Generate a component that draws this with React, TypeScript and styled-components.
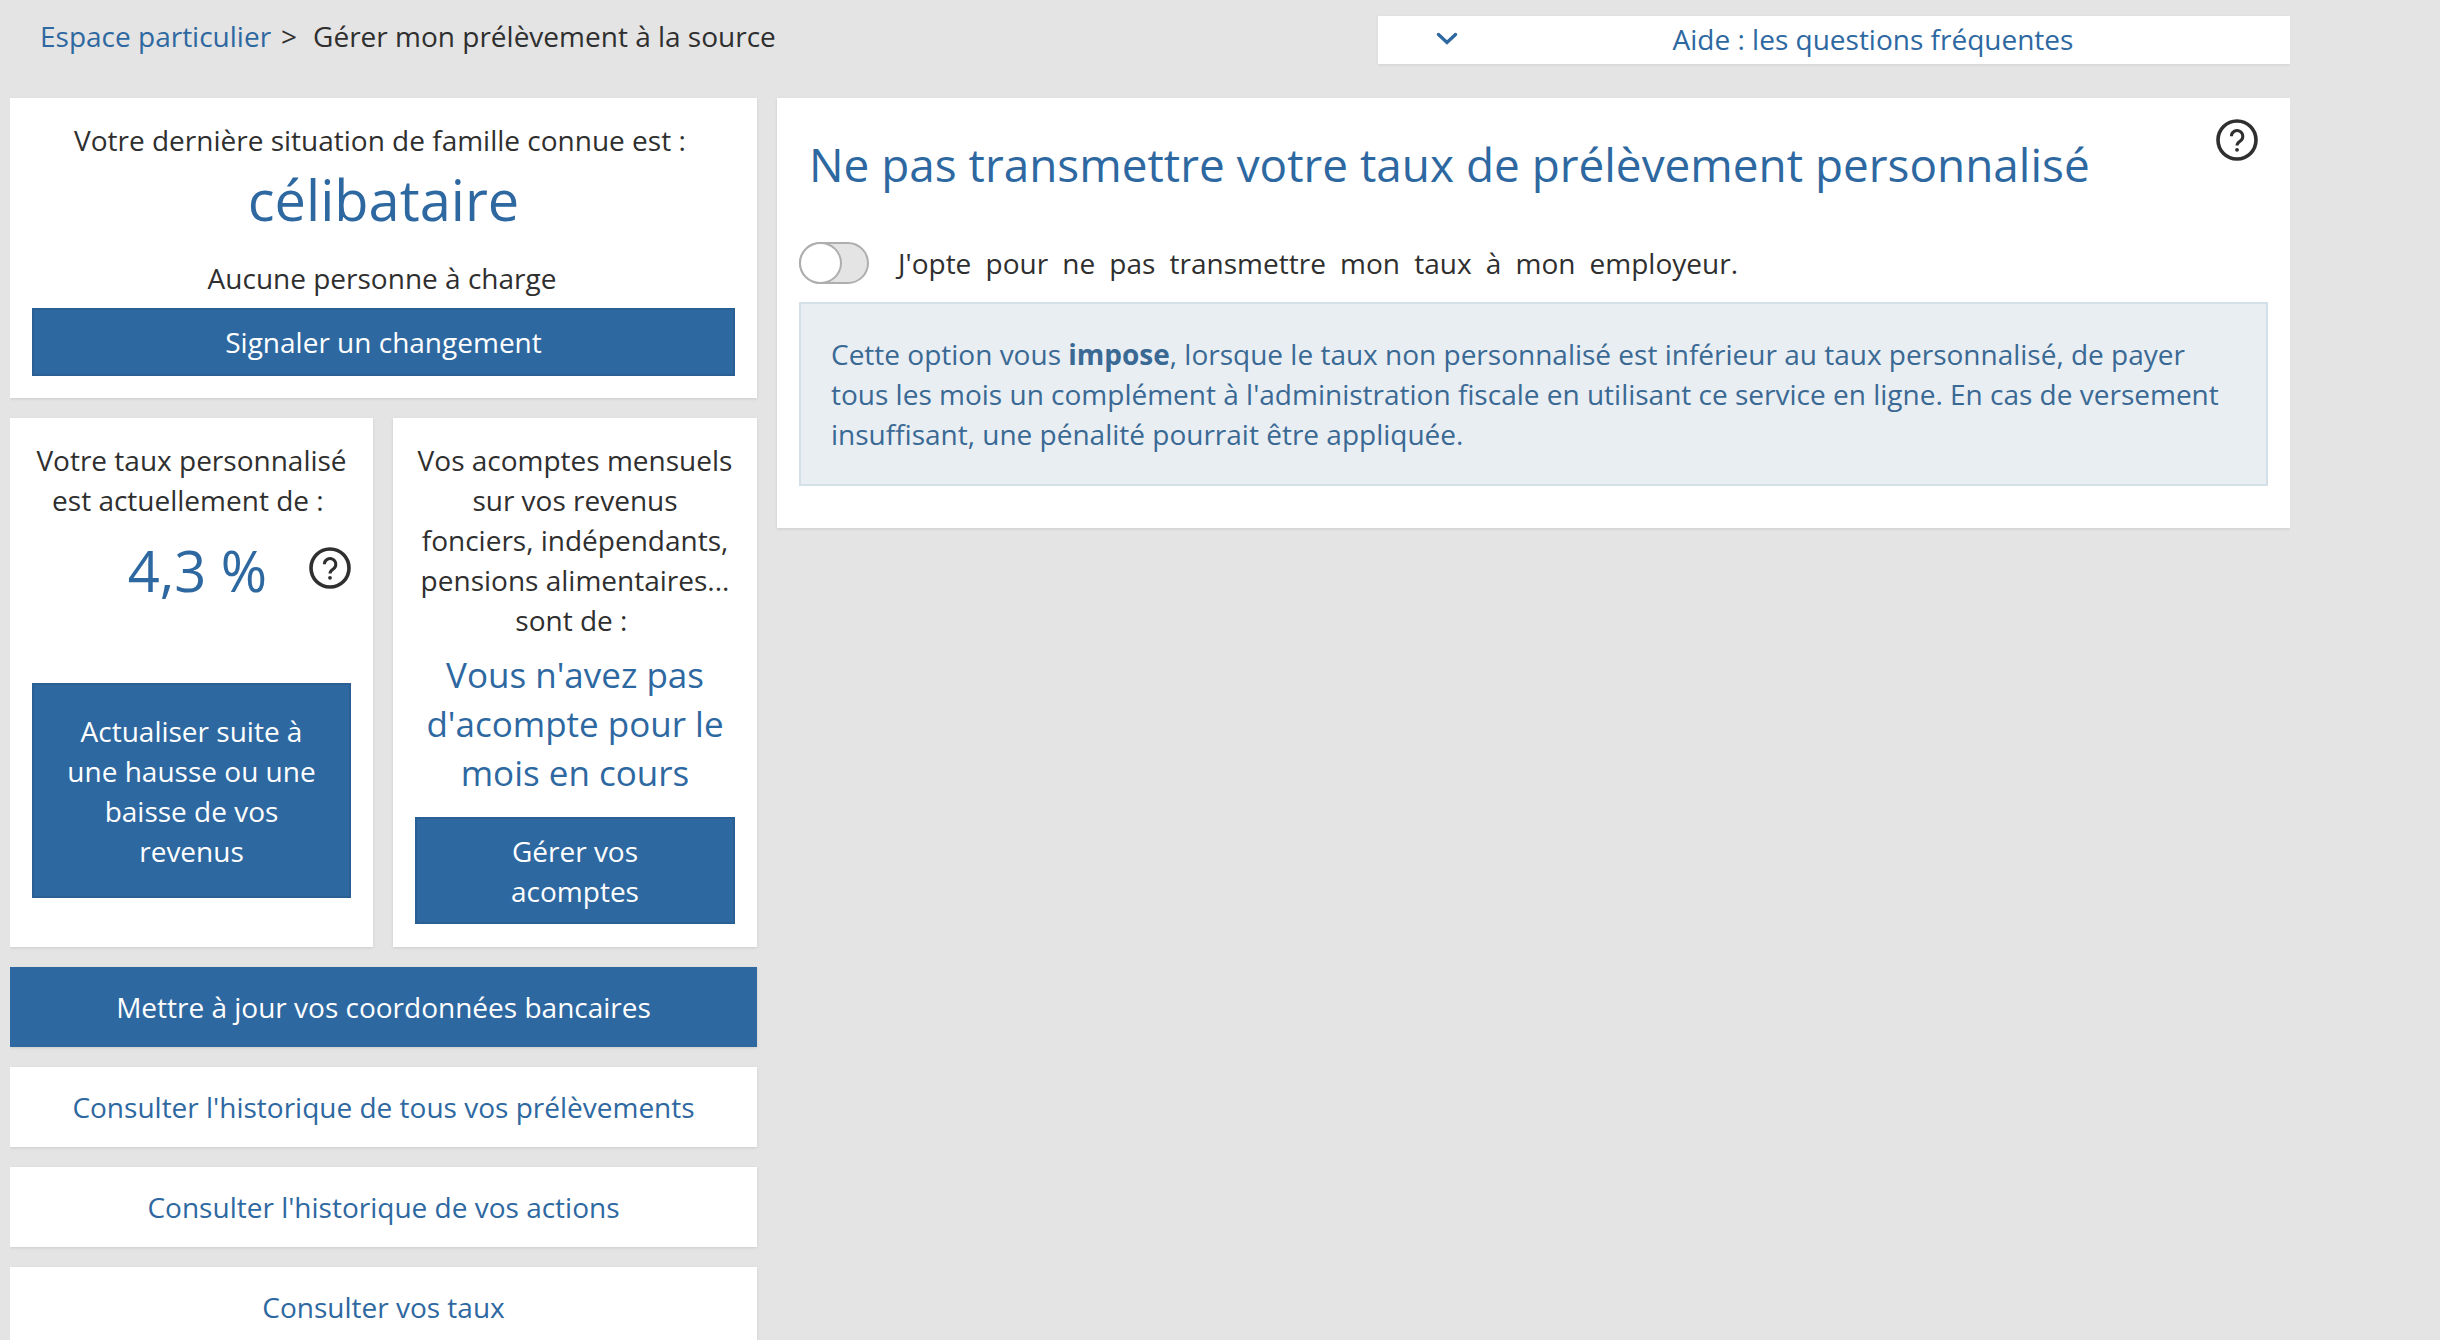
import React from "react";
import styled, { createGlobalStyle } from "styled-components";

const blue = "#2e68a1";
const ink = "#2f2f2f";

const Global = createGlobalStyle`
  html, body { margin: 0; padding: 0; height: 100%; overflow: hidden; background: #e4e4e4; }
  * { box-sizing: border-box; }
  body { font-family: "Open Sans", "Noto Sans", sans-serif; font-size: 28px; line-height: 40px; color: ${ink}; }
`;

const Page = styled.div`
  width: 2280px;
  height: 1340px;
  margin-left: 10px;
  overflow: hidden;
`;

const TopBar = styled.header`
  height: 98px;
  display: flex;
  align-items: flex-start;
  justify-content: space-between;
`;

const Breadcrumb = styled.nav`
  padding: 16px 0 0 30px;
  display: flex;
`;

const CrumbLink = styled.a`
  color: ${blue};
`;

const CrumbSep = styled.span`
  margin: 0 16px 0 10px;
`;

const HelpBar = styled.div`
  margin-top: 16px;
  width: 912px;
  height: 48px;
  padding-left: 58px;
  background: #fff;
  color: ${blue};
  display: flex;
  align-items: center;
  box-shadow: 0 1px 3px rgba(0, 0, 0, 0.08);
`;

const HelpLabel = styled.span`
  flex: 1;
  text-align: center;
  margin-top: -2px;
`;

const Chevron = styled.svg`
  width: 22px;
  height: 14px;
  flex: none;
  margin-right: -2px;
  margin-top: -2px;
`;

const Layout = styled.div`
  display: grid;
  grid-template-columns: 747px 1513px;
  column-gap: 20px;
  align-items: start;
`;

const Side = styled.div`
  display: flex;
  flex-direction: column;
  gap: 20px;
`;

const Card = styled.section`
  background: #fff;
  text-align: center;
  box-shadow: 0 1px 3px rgba(0, 0, 0, 0.1);
`;

const FamilyCard = styled(Card)`
  padding: 22px 22px 22px;
`;

const ChargeLine = styled.div`
  margin-bottom: 10px;
  padding-right: 3px;
`;

const RatesRow = styled.div`
  display: grid;
  grid-template-columns: 363px 364px;
  column-gap: 20px;
`;

const RateCard = styled(Card)`
  padding: 22px 22px 49px;
  display: flex;
  flex-direction: column;
`;

const AcompteCard = styled(Card)`
  padding: 22px 22px 23px;
  display: flex;
  flex-direction: column;
`;

const BigValue = styled.div`
  color: ${blue};
  font-size: 56px;
  line-height: 78px;
  margin-bottom: 20px;
`;

const RateRow = styled.div`
  height: 76px;
  margin-top: 12px;
  display: flex;
  align-items: center;
  justify-content: flex-end;
  gap: 42px;
  margin-bottom: 75px;
`;

const RateValue = styled.span`
  color: ${blue};
  font-size: 56px;
  line-height: 76px;
`;

const BlueNote = styled.div`
  color: ${blue};
  font-size: 35px;
  line-height: 49px;
  margin: 10px 0 20px;
`;

const Action = styled.div<{ $pad: number }>`
  background: ${blue};
  color: #fff;
  border: 2px solid #2a5f93;
  padding: ${(p) => p.$pad}px 30px;
  text-align: center;
`;

const LinkTile = styled.a<{ $primary?: boolean }>`
  height: 80px;
  flex: none;
  display: flex;
  align-items: center;
  justify-content: center;
  background: ${(p) => (p.$primary ? blue : "#fff")};
  color: ${(p) => (p.$primary ? "#fff" : blue)};
  box-shadow: 0 1px 3px rgba(0, 0, 0, 0.1);
`;

const HelpSvg = styled.svg<{ $nudge: number }>`
  width: 42px;
  height: 42px;
  flex: none;
  margin-top: ${(p) => p.$nudge}px;
`;

const HelpIcon = ({ nudge = 0 }: { nudge?: number }) => (
  <HelpSvg $nudge={nudge} viewBox="0 0 42 42" fill="none" stroke={ink} aria-label="Aide">
    <circle cx="21" cy="21" r="19" strokeWidth="3.6" />
    <path d="M15.4 17.3a5.7 5.7 0 1 1 8.9 4.7c-2.1 1.4-3.3 2.4-3.3 4.6" strokeWidth="3" />
    <circle cx="21" cy="30.8" r="1.9" fill={ink} stroke="none" />
  </HelpSvg>
);

const Main = styled.main`
  background: #fff;
  height: 430px;
  padding: 21px 22px 0;
  box-shadow: 0 1px 3px rgba(0, 0, 0, 0.1);
`;

const TitleRow = styled.div`
  display: flex;
  justify-content: space-between;
  align-items: flex-start;
  height: 123px;
  padding-right: 10px;
`;

const Title = styled.h1`
  margin: 13px 0 0 10px;
  font-size: 45.9px;
  line-height: 64px;
  font-weight: 400;
  color: ${blue};
`;

const OptRow = styled.div`
  display: flex;
  align-items: center;
  height: 42px;
`;

const Track = styled.span`
  width: 70px;
  height: 42px;
  flex: none;
  display: flex;
  border: 2px solid #aeaeae;
  border-radius: 21px;
  background: #e4e4e4;
`;

const Knob = styled.span`
  width: 43px;
  height: 42px;
  margin: -2px 0 0 -2px;
  background: #fff;
  border: 2px solid #aeaeae;
  border-radius: 50%;
`;

const OptLabel = styled.span`
  width: 840px;
  margin-left: 29px;
  text-align: justify;
  text-align-last: justify;
`;

const Notice = styled.div`
  margin-top: 18px;
  height: 184px;
  padding: 30px 30px 0;
  background: #e9eef3;
  border: 2px solid #d3e0e8;
  color: #3a6994;
`;

const Strong = styled.strong`
  font-weight: 700;
`;

export default function App() {
  return (
    <Page>
      <Global />
      <TopBar>
        <Breadcrumb>
          <CrumbLink>Espace particulier</CrumbLink>
          <CrumbSep>&gt;</CrumbSep>
          <span>Gérer mon prélèvement à la source</span>
        </Breadcrumb>
        <HelpBar>
          <Chevron viewBox="0 0 22 14" fill="none">
            <path d="M2.5 2.5L11 10.5L19.5 2.5" stroke={blue} strokeWidth="3.4" strokeLinecap="round" />
          </Chevron>
          <HelpLabel>Aide : les questions fréquentes</HelpLabel>
        </HelpBar>
      </TopBar>
      <Layout>
        <Side>
          <FamilyCard>
            <div>Votre dernière situation de famille connue est :&nbsp;</div>
            <BigValue>célibataire</BigValue>
            <ChargeLine>Aucune personne à charge</ChargeLine>
            <Action $pad={12}>Signaler un changement</Action>
          </FamilyCard>
          <RatesRow>
            <RateCard>
              <div>Votre taux personnalisé est actuellement de :&nbsp;</div>
              <RateRow>
                <RateValue>4,3 %</RateValue>
                <HelpIcon nudge={-4} />
              </RateRow>
              <Action $pad={25.5}>Actualiser suite à une hausse ou une baisse de vos revenus</Action>
            </RateCard>
            <AcompteCard>
              <div>Vos acomptes mensuels sur vos revenus fonciers, indépendants, pensions alimentaires... sont de :&nbsp;</div>
              <BlueNote>Vous n'avez pas d'acompte pour le mois en cours</BlueNote>
              <Action $pad={11.5}>Gérer vos acomptes</Action>
            </AcompteCard>
          </RatesRow>
          <LinkTile $primary>Mettre à jour vos coordonnées bancaires</LinkTile>
          <LinkTile>Consulter l'historique de tous vos prélèvements</LinkTile>
          <LinkTile>Consulter l'historique de vos actions</LinkTile>
          <LinkTile>Consulter vos taux</LinkTile>
        </Side>
        <Main>
          <TitleRow>
            <Title>Ne pas transmettre votre taux de prélèvement personnalisé</Title>
            <HelpIcon />
          </TitleRow>
          <OptRow>
            <Track><Knob /></Track>
            <OptLabel>J'opte pour ne pas transmettre mon taux à mon employeur.</OptLabel>
          </OptRow>
          <Notice>
            Cette option vous <Strong>impose</Strong>, lorsque le taux non personnalisé est inférieur au taux personnalisé, de payer tous les mois un complément à l'administration fiscale en utilisant ce service en ligne. En cas de versement insuffisant, une pénalité pourrait être appliquée.
          </Notice>
        </Main>
      </Layout>
    </Page>
  );
}
